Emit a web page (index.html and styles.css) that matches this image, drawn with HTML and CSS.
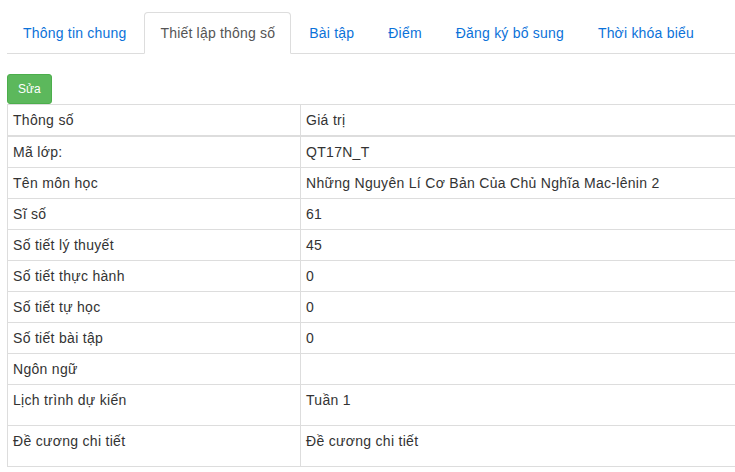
FILE: index.html
```html
<!DOCTYPE html>
<html lang="vi">
<head>
<meta charset="utf-8">
<title>Thiết lập thông số</title>
<link rel="stylesheet" href="styles.css">
</head>
<body>
<div class="page">
  <ul class="tabs">
    <li class="tab"><a href="#">Thông tin chung</a></li>
    <li class="tab active"><a href="#">Thiết lập thông số</a></li>
    <li class="tab"><a href="#">Bài tập</a></li>
    <li class="tab"><a href="#">Điểm</a></li>
    <li class="tab"><a href="#">Đăng ký bổ sung</a></li>
    <li class="tab"><a href="#">Thời khóa biểu</a></li>
  </ul>
  <div class="pane">
    <button class="btn-edit" type="button">Sửa</button>
    <table class="params">
      <thead>
        <tr><th class="col-name">Thông số</th><th>Giá trị</th></tr>
      </thead>
      <tbody>
        <tr><td>Mã lớp:</td><td>QT17N_T</td></tr>
        <tr><td>Tên môn học</td><td>Những Nguyên Lí Cơ Bản Của Chủ Nghĩa Mac-lênin 2</td></tr>
        <tr><td>Sĩ số</td><td>61</td></tr>
        <tr><td>Số tiết lý thuyết</td><td>45</td></tr>
        <tr><td>Số tiết thực hành</td><td>0</td></tr>
        <tr><td>Số tiết tự học</td><td>0</td></tr>
        <tr><td>Số tiết bài tập</td><td>0</td></tr>
        <tr><td>Ngôn ngữ</td><td></td></tr>
        <tr><td><p>Lịch trình dự kiến</p></td><td><p>Tuần 1</p></td></tr>
        <tr><td><p>Đề cương chi tiết</p></td><td><p>Đề cương chi tiết</p></td></tr>
      </tbody>
    </table>
  </div>
</div>
</body>
</html>
```

FILE: styles.css
```css
html, body {
  margin: 0;
  padding: 0;
  overflow: hidden;
  background: #fff;
}

body {
  font-family: "Liberation Sans", Arial, sans-serif;
  font-size: 14px;
  line-height: 20px;
  color: #333;
}

.page {
  padding: 12px 0 0 7px;
  overflow: hidden;
}

.tabs {
  list-style: none;
  margin: 0;
  padding: 0;
  display: flex;
  border-bottom: 1px solid #ddd;
}

.tab {
  margin-right: 2px;
  margin-bottom: -1px;
}

.tab a {
  display: block;
  padding: 10px 15px;
  border: 1px solid transparent;
  border-radius: 4px 4px 0 0;
  color: #0b72d9;
  text-decoration: none;
  letter-spacing: 0.2px;
}

.tab.active a {
  color: #555;
  background: #fff;
  border-color: #ddd #ddd transparent #ddd;
}

.pane {
  padding-top: 20px;
}

.btn-edit {
  display: block;
  height: 30px;
  padding: 5px 10px;
  font-family: "Liberation Sans", Arial, sans-serif;
  font-size: 12px;
  line-height: 18px;
  color: #fff;
  background: #5cb85c;
  border: 1px solid #4cae4c;
  border-radius: 3px;
  cursor: pointer;
}

.params {
  width: calc(100% + 10px);
  border-collapse: collapse;
  border-spacing: 0;
  border: 1px solid #ddd;
}

.params th,
.params td {
  padding: 5px;
  text-align: left;
  vertical-align: top;
  font-weight: normal;
  border: 1px solid #ddd;
  line-height: 20px;
  letter-spacing: 0.3px;
}

.params thead th {
  border-bottom-width: 2px;
}

.params .col-name {
  width: 282px;
}

.params p {
  margin: 0 0 10px;
}
```
